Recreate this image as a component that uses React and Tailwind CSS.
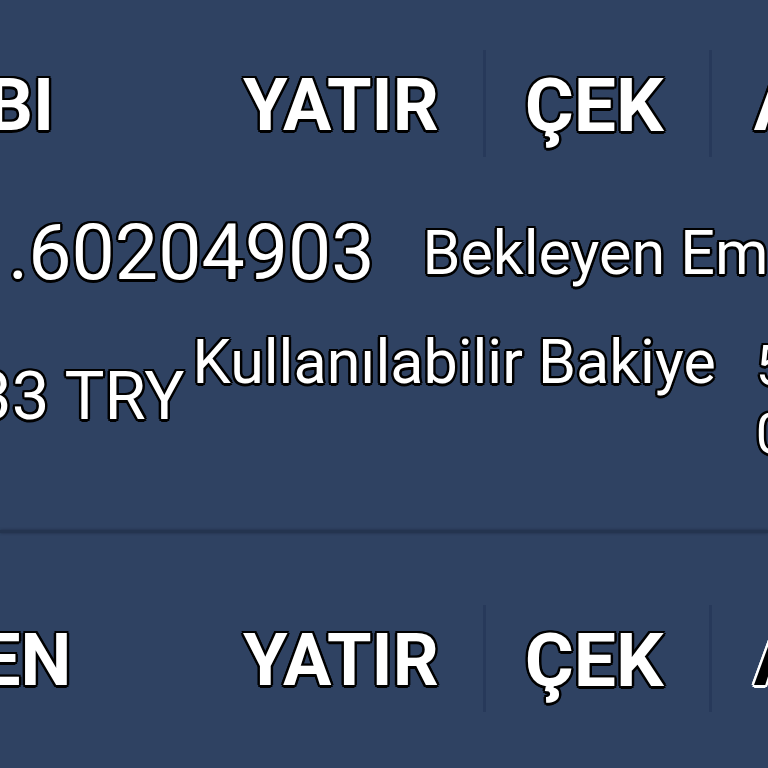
import React from "react";

const outline =
  "[text-shadow:2.5px_0_0_#000,-2.5px_0_0_#000,0_2.5px_0_#000,0_-2.5px_0_#000,1.8px_1.8px_0_#000,-1.8px_-1.8px_0_#000,1.8px_-1.8px_0_#000,-1.8px_1.8px_0_#000]";
const outlineWhite =
  "[text-shadow:2.5px_0_0_#fff,-2.5px_0_0_#fff,0_2.5px_0_#fff,0_-2.5px_0_#fff,1.8px_1.8px_0_#fff,-1.8px_-1.8px_0_#fff,1.8px_-1.8px_0_#fff,-1.8px_1.8px_0_#fff]";

function Divider() {
  return <div className="w-[3px] h-[107px] bg-[#27395a] shrink-0" />;
}

function ActionRow({ lead, leadShift, lastInverted }) {
  return (
    <div className="flex items-center h-[107px]">
      <div className="w-[199px] shrink-0 overflow-hidden flex pt-[4px]">
        <span className={`${leadShift} whitespace-nowrap font-bold text-[72px] leading-none text-white ${outline}`}>{lead}</span>
      </div>
      <div className="pl-[44px] pr-[44px] shrink-0 pt-[4px]">
        <span className={`font-bold text-[72px] leading-none text-white whitespace-nowrap ${outline}`}>YATIR</span>
      </div>
      <Divider />
      <div className="pl-[39px] pr-[45px] shrink-0 pt-[4px]">
        <span className={`font-bold text-[75px] leading-none text-white whitespace-nowrap ${outline}`}>ÇEK</span>
      </div>
      <Divider />
      <div className="pl-[42px] shrink-0 pt-[4px]">
        {lastInverted ? (
          <span className={`font-bold text-[72px] leading-none text-black whitespace-nowrap ${outlineWhite}`}>AL</span>
        ) : (
          <span className={`font-bold text-[72px] leading-none text-white whitespace-nowrap ${outline}`}>AL</span>
        )}
      </div>
    </div>
  );
}

export default function App() {
  return (
    <div className="w-[768px] h-[768px] overflow-hidden bg-[#2f4262] font-['Roboto',sans-serif] text-white">
      <div className="pt-[50px]">
        <ActionRow lead="BI" leadShift="-ml-[13px]" />
      </div>

      <div className="flex items-center mt-[58px] whitespace-nowrap">
        <span className={`ml-[8px] text-[77px] leading-none ${outline}`}>.60204903</span>
        <span className={`ml-[48px] text-[61px] leading-none ${outline}`}>Bekleyen Emir</span>
      </div>

      <div className="flex items-start mt-[40px] whitespace-nowrap">
        <span className={`-ml-[26px] mt-[31px] text-[67px] leading-none ${outline}`}>33 TRY</span>
        <span className={`ml-[8px] text-[61px] leading-none ${outline}`}>Kullanılabilir Bakiye</span>
        <div className={`ml-[40px] flex flex-col text-[55px] leading-[68px] ${outline}`}>
          <span>5.000</span>
          <span>0.00</span>
        </div>
      </div>

      <div className="mt-[62px] h-[3px] bg-[#24344f] shadow-[0_0_3px_#1f2d45]" />

      <div className="pt-[72px]">
        <ActionRow lead="EN" leadShift="-ml-[20px]" lastInverted />
      </div>
    </div>
  );
}
